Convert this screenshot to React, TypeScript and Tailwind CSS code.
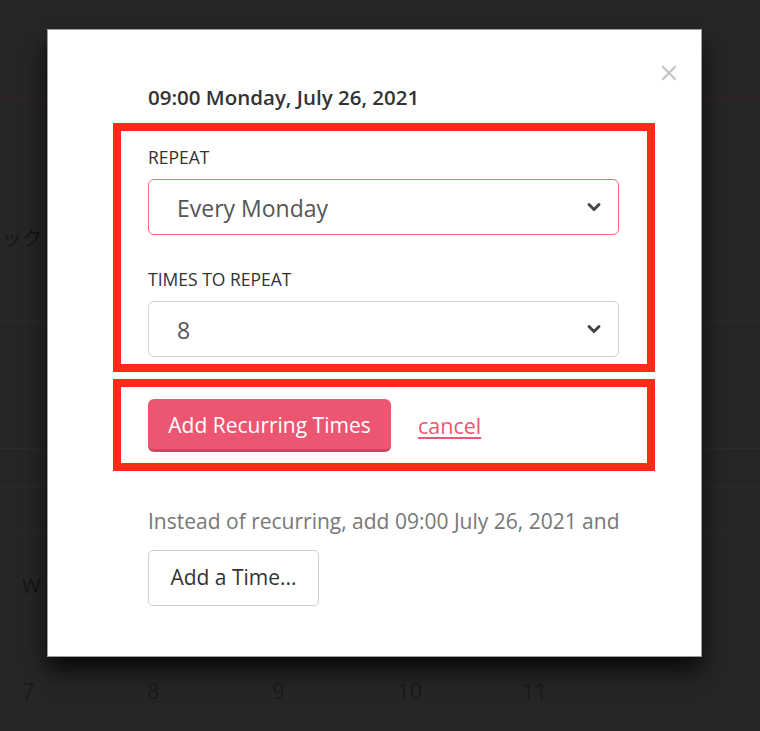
import { ChevronDown } from "lucide-react"

const font = { fontFamily: "'Open Sans', 'Noto Sans CJK JP', sans-serif" }

function Select({ value, highlighted }: { value: string; highlighted?: boolean }) {
  return (
    <div
      className={`flex h-[56px] w-[471px] items-center justify-between rounded-[6px] bg-white pl-[28px] pr-[14px] ${
        highlighted ? "border-[1.5px] border-[#ef6c85]" : "border-[1.5px] border-[#d2d2d2]"
      }`}
    >
      <span className="pt-[3px] text-[23px] text-[#555]">{value}</span>
      <ChevronDown className="h-[20px] w-[20px] text-[#444]" strokeWidth={3.5} />
    </div>
  )
}

export default function App() {
  const numbers = ["7", "8", "9", "10", "11"]

  return (
    <div className="relative h-[731px] w-[760px] overflow-hidden bg-[#262626]" style={font}>
      {/* page behind the overlay */}
      <div className="flex flex-col">
        <div className="h-[29px] border-b border-[#2a2a2a]" />
        <div className="h-[70px] border-b border-[#3a2222]" />
        <div className="flex h-[223px] items-end border-b border-[#2c2c2c] pb-[67px]">
          <span className="pl-[2px] text-[20px] text-[#151515]">ック</span>
        </div>
        <div className="h-[127px] border-b border-[#2c2c2c]" />
        <div className="h-[38px] border-b border-[#2c2c2c]" />
        <div className="h-[42px] border-b border-[#2a2a2a]" />
        <div className="flex h-[114px] items-center pl-[22px] text-[20px] text-[#151515]">W</div>
        <div className="flex h-[94px] items-center pl-[22px] text-[22px] text-[#1a1a1a]">
          {numbers.map((n) => (
            <span key={n} className="w-[125px]">
              {n}
            </span>
          ))}
        </div>
      </div>

      {/* modal */}
      <div className="absolute left-[47px] top-[29px] h-[628px] w-[655px] border border-[#9d9d9d] bg-white pl-[100px] pt-[55px] shadow-[0_14px_22px_rgba(0,0,0,0.75)]">
        <button className="absolute right-[24px] top-[35px]">
          <svg width="16" height="16" viewBox="0 0 16 16" stroke="#c6c6c6" strokeWidth="2.4" strokeLinecap="round">
            <path d="M2 2 L14 14 M14 2 L2 14" />
          </svg>
        </button>

        <div className="text-[20.5px] font-semibold leading-[24px] text-[#333]">09:00 Monday, July 26, 2021</div>

        <div className="-ml-[35px] mt-[14px] w-[542px] border-[8px] border-[#ff2a17] px-[27px] pb-[7px] pt-[16px]">
          <div className="text-[17.5px] leading-[20px] text-[#333]">REPEAT</div>
          <div className="mt-[12px]">
            <Select value="Every Monday" highlighted />
          </div>
          <div className="mt-[34px] text-[17.5px] leading-[20px] text-[#333]">TIMES TO REPEAT</div>
          <div className="mt-[12px]">
            <Select value="8" />
          </div>
        </div>

        <div className="-ml-[35px] mt-[7px] flex w-[542px] items-center gap-[27px] border-[8px] border-[#ff2a17] px-[27px] pb-[11px] pt-[12px]">
          <button className="h-[53px] w-[243px] rounded-[6px] border-b-[3px] border-[#c94760] bg-[#ec5672] pt-[3px] text-[21px] font-medium text-white">
            Add Recurring Times
          </button>
          <a className="pt-[2px] text-[21.5px] text-[#ec5672] underline underline-offset-[3px]">cancel</a>
        </div>

        <div className="mt-[37px] text-[21px] leading-[26px] text-[#777]">
          Instead of recurring, add 09:00 July 26, 2021 and
        </div>

        <button className="mt-[16px] h-[56px] w-[171px] rounded-[5px] border-[1.5px] border-[#cfcfcf] bg-white text-[21px] text-[#333]">
          Add a Time...
        </button>
      </div>
    </div>
  )
}
